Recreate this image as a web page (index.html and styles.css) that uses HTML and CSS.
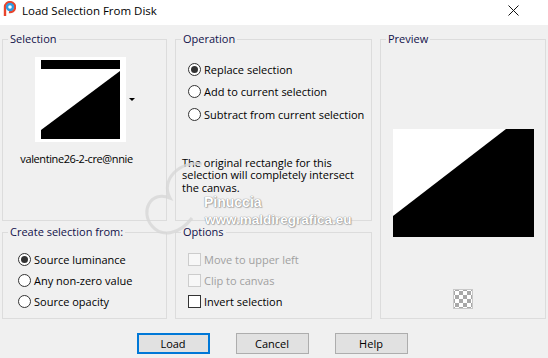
FILE: index.html
```html
<!DOCTYPE html>
<html lang="en">
<head>
    <meta charset="UTF-8">
    <title>Load Selection From Disk</title>
    <link rel="stylesheet" href="styles.css">
</head>
<body>
    <div class="window">
        <!-- Title bar -->
        <div class="titlebar">
            <svg class="app-icon" width="13" height="16" viewBox="0 0 13 16">
                <path d="M2 15 L2 6 A5 5 0 1 1 6 11" fill="none" stroke="#e8452c" stroke-width="2.4"/>
                <circle cx="7" cy="6" r="4.2" fill="#2f9be0"/>
                <circle cx="7" cy="6" r="1.8" fill="#fff"/>
            </svg>
            <span class="title">Load Selection From Disk</span>
            <svg class="close-icon" width="11" height="11" viewBox="0 0 11 11">
                <path d="M0.5 0.5 L10.5 10.5 M10.5 0.5 L0.5 10.5" stroke="#111" stroke-width="1"/>
            </svg>
        </div>

        <div class="dialog">
            <div class="panels">
                <!-- Selection -->
                <fieldset class="group group-selection">
                    <legend>Selection</legend>
                    <div class="thumb-row">
                        <div class="thumb">
                            <svg width="79" height="79" viewBox="0 0 79 79">
                                <rect width="79" height="79" fill="#fff"/>
                                <rect width="79" height="9" fill="#000"/>
                                <polygon points="0,70 79,11 79,79 0,79" fill="#000"/>
                            </svg>
                        </div>
                        <span class="drop-arrow"></span>
                    </div>
                    <div class="sel-name">valentine26-2-cre@nnie</div>
                </fieldset>

                <!-- Operation -->
                <fieldset class="group group-operation">
                    <legend>Operation</legend>
                    <div class="choices">
                        <div class="choice"><span class="radio checked"></span>Replace selection</div>
                        <div class="choice"><span class="radio"></span>Add to current selection</div>
                        <div class="choice"><span class="radio"></span>Subtract from current selection</div>
                    </div>
                    <p class="note">The original rectangle for this selection will completely intersect the canvas.</p>
                </fieldset>

                <!-- Preview -->
                <fieldset class="group group-preview">
                    <legend>Preview</legend>
                    <div class="preview-img">
                        <svg width="141" height="108" viewBox="0 0 141 108">
                            <rect width="141" height="108" fill="#000"/>
                            <polygon points="0,0 113,0 0,87" fill="#fff"/>
                        </svg>
                    </div>
                    <div class="checker"></div>
                </fieldset>

                <!-- Create selection from -->
                <fieldset class="group group-create">
                    <legend>Create selection from:</legend>
                    <div class="choices">
                        <div class="choice"><span class="radio checked"></span>Source luminance</div>
                        <div class="choice"><span class="radio"></span>Any non-zero value</div>
                        <div class="choice"><span class="radio"></span>Source opacity</div>
                    </div>
                </fieldset>

                <!-- Options -->
                <fieldset class="group group-options">
                    <legend>Options</legend>
                    <div class="choices">
                        <div class="choice disabled"><span class="check"></span>Move to upper left</div>
                        <div class="choice disabled"><span class="check"></span>Clip to canvas</div>
                        <div class="choice"><span class="check"></span>Invert selection</div>
                    </div>
                </fieldset>
            </div>

            <div class="buttons">
                <button class="btn btn-default">Load</button>
                <button class="btn">Cancel</button>
                <button class="btn">Help</button>
            </div>
        </div>

        <!-- Watermark -->
        <div class="watermark">
            <svg class="wm-heart" width="70" height="80" viewBox="0 0 70 80">
                <path d="M62 4 C40 0 20 20 30 38 C10 30 0 52 12 66 C22 78 40 74 52 58" fill="none" stroke="#d8d8d8" stroke-width="3"/>
            </svg>
            <span class="wm-name">Pinuccia</span>
            <span class="wm-url">www.maldiregrafica.eu</span>
        </div>
    </div>
</body>
</html>
```

FILE: styles.css
```css
/* Base */
body {
    margin: 0;
    padding: 0;
    font-family: 'Open Sans', 'Noto Sans', sans-serif;
    font-size: 11px;
    color: #000;
    background: #f0f0f0;
}

.window {
    width: 548px;
    height: 358px;
    position: relative;
    background: #f0f0f0;
    overflow: hidden;
}

/* Title bar */
.titlebar {
    height: 25px;
    background: #fff;
    display: flex;
    align-items: center;
    padding-left: 3px;
    box-sizing: border-box;
}

.app-icon {
    margin-top: -7px;
}

.title {
    margin-left: 6px;
    font-size: 11.5px;
    margin-top: -4px;
}

.close-icon {
    margin-left: auto;
    margin-right: 29px;
    margin-top: -5px;
}

/* Dialog body */
.dialog {
    padding: 6px 2px 0 2px;
}

.panels {
    display: grid;
    grid-template-columns: 165px 197px 166px;
    grid-template-rows: 190px 95px;
    column-gap: 8px;
    row-gap: 3px;
}

.group {
    margin: 0;
    padding: 0;
    min-width: 0;
    border: 1px solid #dcdcdc;
}

.group legend {
    margin-left: 5px;
    padding: 0 2px;
    line-height: 16px;
    color: #10104a;
}

.group-preview {
    grid-column: 3;
    grid-row: 1 / span 2;
}

.group-create {
    grid-column: 1;
    grid-row: 2;
}

.group-options {
    grid-column: 2;
    grid-row: 2;
}

/* Selection thumbnail */
.thumb-row {
    display: flex;
    align-items: center;
    padding-left: 32px;
    margin-top: 10px;
}

.thumb {
    background: #fff;
    padding: 3px 6px;
    line-height: 0;
}

.drop-arrow {
    margin-left: 3px;
    width: 0;
    height: 0;
    border-left: 3px solid transparent;
    border-right: 3px solid transparent;
    border-top: 3px solid #000;
}

.sel-name {
    margin-top: 9px;
    line-height: 16px;
    text-align: center;
    padding-right: 16px;
    letter-spacing: -0.4px;
}

/* Radio and check rows */
.choices {
    display: flex;
    flex-direction: column;
}

.group-operation .choices {
    padding-left: 12px;
    margin-top: 11px;
}

.group-operation .choice {
    height: 22.5px;
}

.group-create .choices {
    padding-left: 15px;
    margin-top: 9px;
}

.group-options .choices {
    padding-left: 12px;
    margin-top: 9px;
}

.choice {
    display: flex;
    align-items: center;
    height: 21px;
    white-space: nowrap;
}

.choice.disabled {
    color: #a0a0a0;
}

.radio {
    width: 13px;
    height: 13px;
    box-sizing: border-box;
    border: 1px solid #333;
    border-radius: 50%;
    background: #fff;
    margin-right: 3px;
    display: flex;
    justify-content: center;
    align-items: center;
    flex-shrink: 0;
}

.radio.checked::after {
    content: '';
    width: 7px;
    height: 7px;
    border-radius: 50%;
    background: #333;
}

.check {
    width: 13px;
    height: 13px;
    box-sizing: border-box;
    border: 1px solid #333;
    background: #fff;
    margin-right: 3px;
    flex-shrink: 0;
}

.disabled .check {
    border-color: #cccccc;
    background: #f7f7f7;
}

.note {
    margin: 31px 0 0 0;
    padding-left: 6px;
    padding-right: 6px;
    line-height: 12.5px;
}

/* Preview */
.preview-img {
    margin-top: 82px;
    display: flex;
    justify-content: center;
    line-height: 0;
}

.checker {
    width: 20px;
    height: 20px;
    box-sizing: border-box;
    margin: 52px auto 0;
    border: 1px solid #c8c8c8;
    background-color: #fff;
    background-image: conic-gradient(#a8a8a8 25%, #fff 0 50%, #a8a8a8 0 75%, #fff 0);
    background-size: 8px 8px;
    background-position: 1px 1px;
}

/* Buttons */
.buttons {
    display: flex;
    justify-content: center;
    gap: 26px;
    margin-top: 14px;
    padding-right: 4px;
}

.btn {
    width: 73px;
    height: 21px;
    box-sizing: border-box;
    font-family: 'Open Sans', 'Noto Sans', sans-serif;
    font-size: 11px;
    color: #000;
    background: #e1e1e1;
    border: 1px solid #adadad;
    padding: 0;
    margin: 0;
}

.btn-default {
    border: 2px solid #0078d7;
}

/* Watermark */
.watermark {
    position: absolute;
    left: 0;
    top: 0;
    pointer-events: none;
}

.wm-heart {
    position: absolute;
    left: 140px;
    top: 160px;
    opacity: 0.8;
}

.wm-name,
.wm-url {
    position: absolute;
    font-family: 'Liberation Sans', sans-serif;
    font-weight: bold;
    color: #fff;
    text-shadow: 0 0 1px #888, 0 0 1px #888, 1px 1px 1px #bbb;
    white-space: nowrap;
}

.wm-name {
    left: 204px;
    top: 197px;
    font-size: 14px;
    line-height: 11px;
}

.wm-url {
    left: 205px;
    top: 215px;
    font-size: 13.5px;
    line-height: 9px;
}
```
